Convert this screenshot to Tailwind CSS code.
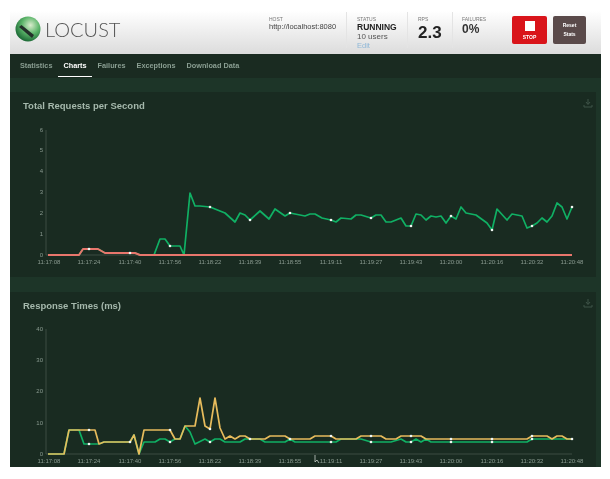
<!DOCTYPE html>
<html lang="en">
<head>
  <meta charset="UTF-8">
  <title>Locust</title>
  <script src="https://cdn.jsdelivr.net/npm/@tailwindcss/browser@4"></script>
</head>
<body class="bg-white font-['Liberation_Sans',Arial,sans-serif] overflow-hidden">
  <div class="ml-[10px] w-[591px] h-[467px] flex flex-col blur-[0.6px]">

    <!-- Header -->
    <header class="h-[54px] flex bg-gradient-to-b from-white from-20% to-[#dcdcdc] relative">
      <div class="flex items-center pl-[5px] pt-[4px] w-[259px]">
        <svg width="30" height="28" viewBox="0 0 30 28">
          <defs>
            <radialGradient id="ball" cx="0.6" cy="0.35" r="0.7">
              <stop offset="0" stop-color="#d8eccc"/>
              <stop offset="0.5" stop-color="#5cb56a"/>
              <stop offset="1" stop-color="#14602f"/>
            </radialGradient>
          </defs>
          <circle cx="13" cy="14" r="12.5" fill="url(#ball)"/>
          <path d="M4 12 L6.5 10 L19 20 L17 23 Z" fill="#24302a"/>
        </svg>
        <span class="font-['Lato',sans-serif] text-[20px] leading-none font-light text-[#555]">LOCUST</span>
      </div>

      <div class="w-[77px] pt-[16px]">
        <div class="text-[5px] leading-[6px] text-[#777]">HOST</div>
        <div class="text-[7.5px] leading-[9px] text-[#444]">http://localhost:8080</div>
      </div>
      <div class="w-[61px] mt-[12px] h-[36px] border-l border-[#e4e4e4] pl-[10px] pt-[4px]">
        <div class="text-[5px] leading-[6px] text-[#777]">STATUS</div>
        <div class="text-[8.5px] leading-[10px] font-bold text-[#222]">RUNNING</div>
        <div class="text-[8px] leading-[10px] text-[#555]">10 users</div>
        <div class="text-[7.5px] leading-[8px] text-[#8fb8d8]">Edit</div>
      </div>
      <div class="w-[45px] mt-[12px] h-[36px] border-l border-[#e4e4e4] pl-[10px] pt-[4px]">
        <div class="text-[5px] leading-[6px] text-[#777]">RPS</div>
        <div class="text-[17px] leading-[22px] font-bold text-[#222]">2.3</div>
      </div>
      <div class="w-[50px] mt-[12px] h-[36px] border-l border-[#e4e4e4] pl-[9px] pt-[4px]">
        <div class="text-[5px] leading-[6px] text-[#777]">FAILURES</div>
        <div class="text-[12px] leading-[15px] font-bold text-[#333]">0%</div>
      </div>
      <div class="flex gap-[6px] mt-[16px] ml-[10px]">
        <div class="w-[35px] h-[28px] rounded-[2px] bg-[#d9141a] flex flex-col items-center pt-[5px]">
          <div class="w-[10px] h-[10px] bg-white"></div>
          <div class="text-[5px] leading-[6px] mt-[3px] font-bold text-white">STOP</div>
        </div>
        <div class="w-[33px] h-[28px] rounded-[2px] bg-[#5a4a4a] flex flex-col items-center justify-center">
          <div class="text-[5px] leading-[9px] font-bold text-white">Reset</div>
          <div class="text-[5px] leading-[9px] font-bold text-white">Stats</div>
        </div>
      </div>
    </header>

    <!-- Tabs -->
    <nav class="h-[24px] bg-[#1a2b21] flex pl-[10px] gap-[11px] text-[7.3px] font-bold text-[#8a9e92]">
      <span class="pt-[7px]">Statistics</span>
      <span class="pt-[7px] text-white border-b border-white h-[23px] -mx-[5px] px-[5px]">Charts</span>
      <span class="pt-[7px]">Failures</span>
      <span class="pt-[7px]">Exceptions</span>
      <span class="pt-[7px]">Download Data</span>
    </nav>

    <!-- Charts -->
    <main class="flex-1 bg-[#1d3528] flex flex-col pt-[14px] gap-[15px]">
      <section class="h-[185px] mr-[5px] bg-[#192b21] relative">
        <h2 class="absolute left-[13px] top-[8px] text-[9.5px] leading-[12px] font-bold text-[#a5b8ac]">Total Requests per Second</h2>
        <svg class="absolute right-[3px] top-[6px]" width="10" height="10" viewBox="0 0 10 10" fill="none" stroke="#3f5449" stroke-width="1">
          <path d="M5 1 V6 M3 4 L5 6.5 L7 4 M1 7 V9 H9 V7"/>
        </svg>
        <svg class="absolute left-[-10px] top-[-92px]" width="610" height="300" viewBox="0 0 610 300" fill="none">
          <path d="M46 130 V255 H572" stroke="#4a5a50" stroke-width="0.7"/>
          <g fill="#8a9a90" font-size="6" text-anchor="end">
            <text x="43" y="132">6</text><text x="43" y="152">5</text><text x="43" y="173">4</text>
            <text x="43" y="194">3</text><text x="43" y="215">2</text><text x="43" y="236">1</text><text x="43" y="257">0</text>
          </g>
          <g fill="#8a9a90" font-size="6" text-anchor="middle">
            <text x="49" y="264">11:17:08</text><text x="89" y="264">11:17:24</text><text x="130" y="264">11:17:40</text>
            <text x="170" y="264">11:17:56</text><text x="210" y="264">11:18:22</text><text x="250" y="264">11:18:39</text>
            <text x="290" y="264">11:18:55</text><text x="331" y="264">11:19:11</text><text x="371" y="264">11:19:27</text>
            <text x="411" y="264">11:19:43</text><text x="451" y="264">11:20:00</text><text x="492" y="264">11:20:16</text>
            <text x="532" y="264">11:20:32</text><text x="572" y="264">11:20:48</text>
          </g>
          <polyline stroke="#10b064" stroke-width="1.7" stroke-linejoin="round" points="48,255 79,255 83,249 98,249 105,253 135,253 140,255 154,255 160,239 165,239 170,246 180,246 184,255 190,193 195,206 200,206 210,207 215,209 225,213 235,222 240,213 245,215 250,220 260,211 269,219 275,209 285,216 290,213 295,214 305,216 310,214 315,214 322,218 331,220 336,222 341,218 351,219 356,215 361,215 371,218 376,215 381,215 386,222 391,222 401,218 406,226 411,226 416,214 421,215 426,220 431,216 436,217 441,216 446,223 451,216 456,219 461,207 466,213 471,214 476,215 487,223 492,230 497,209 507,220 512,214 522,216 527,228 532,226 537,223 542,218 547,222 552,216 557,203 562,207 567,219 572,207"/>
          <polyline stroke="#e8766c" stroke-width="2" stroke-linejoin="round" points="48,255 79,255 83,249 98,249 105,253 135,253 140,255 572,255"/>
          <g fill="#f0f6f2">
            <circle cx="89" cy="249" r="1.3"/><circle cx="130" cy="253" r="1.3"/><circle cx="170" cy="246" r="1.3"/><circle cx="210" cy="207" r="1.3"/>
            <circle cx="250" cy="220" r="1.3"/><circle cx="290" cy="213" r="1.3"/><circle cx="331" cy="220" r="1.3"/><circle cx="371" cy="218" r="1.3"/>
            <circle cx="411" cy="226" r="1.3"/><circle cx="451" cy="216" r="1.3"/><circle cx="492" cy="230" r="1.3"/><circle cx="532" cy="226" r="1.3"/><circle cx="572" cy="207" r="1.3"/>
          </g>
        </svg>
      </section>

      <section class="flex-1 mr-[5px] bg-[#192b21] relative overflow-hidden">
        <h2 class="absolute left-[13px] top-[8px] text-[9.5px] leading-[12px] font-bold text-[#a5b8ac]">Response Times (ms)</h2>
        <svg class="absolute right-[3px] top-[6px]" width="10" height="10" viewBox="0 0 10 10" fill="none" stroke="#3f5449" stroke-width="1">
          <path d="M5 1 V6 M3 4 L5 6.5 L7 4 M1 7 V9 H9 V7"/>
        </svg>
        <svg class="absolute left-[-10px] top-[-292px]" width="610" height="479" viewBox="0 0 610 479" fill="none">
          <path d="M46 329 V454 H572" stroke="#4a5a50" stroke-width="0.7"/>
          <g fill="#8a9a90" font-size="6" text-anchor="end">
            <text x="43" y="331">40</text><text x="43" y="362">30</text><text x="43" y="393">20</text>
            <text x="43" y="425">10</text><text x="43" y="456">0</text>
          </g>
          <g fill="#8a9a90" font-size="6" text-anchor="middle">
            <text x="49" y="463">11:17:08</text><text x="89" y="463">11:17:24</text><text x="130" y="463">11:17:40</text>
            <text x="170" y="463">11:17:56</text><text x="210" y="463">11:18:22</text><text x="250" y="463">11:18:39</text>
            <text x="290" y="463">11:18:55</text><text x="331" y="463">11:19:11</text><text x="371" y="463">11:19:27</text>
            <text x="411" y="463">11:19:43</text><text x="451" y="463">11:20:00</text><text x="492" y="463">11:20:16</text>
            <text x="532" y="463">11:20:32</text><text x="572" y="463">11:20:48</text>
          </g>
          <polyline stroke="#10b064" stroke-width="1.7" stroke-linejoin="round" points="48,454 64,454 69,430 79,430 84,444 99,444 104,442 130,442 134,435 139,454 144,442 155,442 160,439 165,439 170,442 175,439 180,439 185,426 190,432 195,444 205,439 210,442 215,439 220,439 225,442 240,442 245,439 260,439 265,442 285,442 290,439 295,442 331,442 336,442 341,439 361,439 371,442 391,442 401,439 406,442 411,442 416,439 421,442 426,439 431,442 527,442 532,439 547,439 552,439 572,439"/>
          <polyline stroke="#e6bb5c" stroke-width="1.7" stroke-linejoin="round" points="48,454 64,454 69,430 95,430 99,444 104,442 130,442 134,435 139,454 144,430 170,430 175,439 180,439 185,426 195,426 200,398 205,426 210,429 215,398 220,428 225,439 230,436 235,439 240,436 245,436 250,439 265,439 270,436 285,436 290,439 310,439 315,436 331,436 336,439 356,439 361,436 381,436 386,439 396,439 401,436 421,436 426,439 527,439 532,436 547,436 552,439 557,436 562,436 567,439 572,439"/>
          <g fill="#f0f6f2">
            <circle cx="89" cy="430" r="1.3"/><circle cx="130" cy="442" r="1.3"/><circle cx="170" cy="430" r="1.3"/><circle cx="210" cy="429" r="1.3"/>
            <circle cx="250" cy="439" r="1.3"/><circle cx="290" cy="439" r="1.3"/><circle cx="331" cy="436" r="1.3"/><circle cx="371" cy="436" r="1.3"/>
            <circle cx="411" cy="436" r="1.3"/><circle cx="451" cy="439" r="1.3"/><circle cx="492" cy="439" r="1.3"/><circle cx="532" cy="436" r="1.3"/><circle cx="572" cy="439" r="1.3"/>
            <circle cx="89" cy="444" r="1.3"/><circle cx="170" cy="442" r="1.3"/><circle cx="210" cy="442" r="1.3"/><circle cx="331" cy="442" r="1.3"/>
            <circle cx="371" cy="442" r="1.3"/><circle cx="411" cy="442" r="1.3"/><circle cx="451" cy="442" r="1.3"/><circle cx="492" cy="442" r="1.3"/><circle cx="532" cy="439" r="1.3"/>
          </g>
          <path d="M315 455 V462 L317 460 L319 463" stroke="#c8d0cc" stroke-width="0.8"/>
        </svg>
      </section>
    </main>
  </div>
</body>
</html>
